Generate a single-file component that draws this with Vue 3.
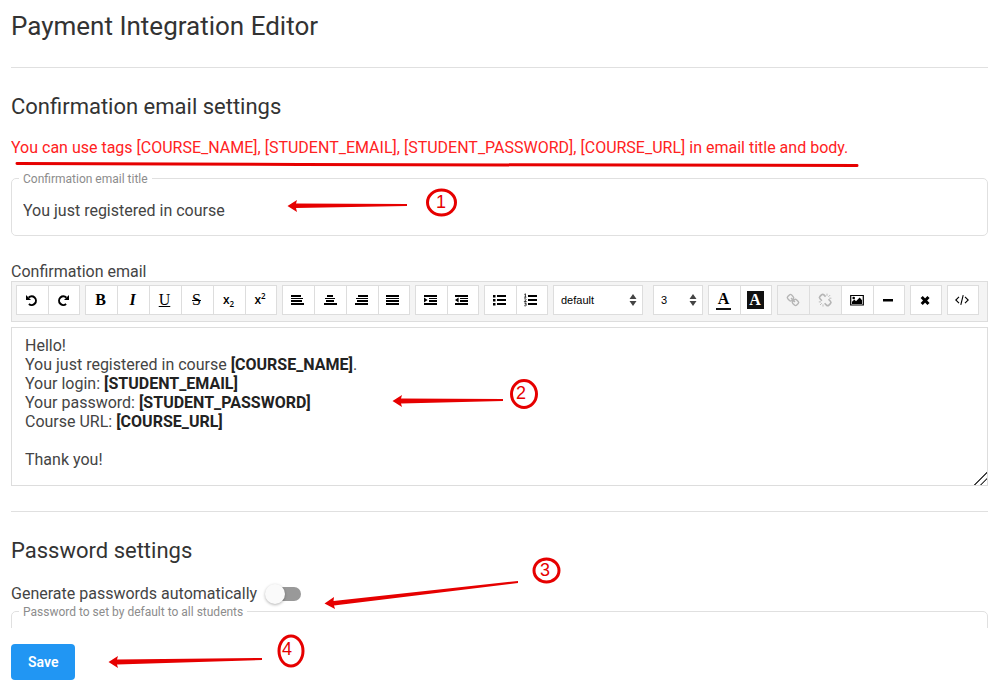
<script setup>
import { ref } from 'vue'

const title = ref('You just registered in course')
const fontName = ref('default')
const fontSize = ref('3')
const autoPasswords = ref(false)
const defaultPassword = ref('')

const icons = {
  undo: [
    { d: 'M4.6 5.6A4.3 4.3 0 1 1 4.9 12', line: 2 },
    { d: 'M2 3v5h5z' },
  ],
  redo: [
    { d: 'M11.4 5.6A4.3 4.3 0 1 0 11.1 12', line: 2 },
    { d: 'M14 3v5H9z' },
  ],
  left: [{ d: 'M1 3h10v2H1zM1 6h12v1H1zM1 8h11v2H1zM1 11h13v2H1z' }],
  center: [{ d: 'M5 3h6v2H5zM3 6h10v1H3zM4 8h8v2H4zM2 11h13v2H2z' }],
  right: [{ d: 'M4 3h10v2H4zM2 6h12v1H2zM3 8h11v2H3zM1 11h13v2H1z' }],
  justify: [{ d: 'M1 3h13v2H1zM1 6h13v1H1zM1 8h13v2H1zM1 11h13v2H1z' }],
  indent: [{ d: 'M1 3h13v2H1zM6 6h8v1H6zM6 8h8v2H6zM1 11h13v2H1zM1 5.6l3.6 2.4L1 10.4z' }],
  outdent: [{ d: 'M1 3h13v2H1zM6 6h8v1H6zM6 8h8v2H6zM1 11h13v2H1zM4.6 5.6L1 8l3.6 2.4z' }],
  bullets: [{ d: 'M5 3h9v2H5zM5 7h9v2H5zM5 11h9v2H5zM1 3h2.5v2.4H1zM1 7h2.5v2.4H1zM1 11h2.5v2.4H1z' }],
  numbers: [
    { d: 'M5 3h9v2H5zM5 7h9v2H5zM5 11h9v2H5z' },
    { d: 'M1.4 2.4l1-.6v3.4M1.2 5.2h2.2M1.2 7c1-.8 2.4 0 1.6 1L1.3 9.5h2.3M1.3 11h2l-1 1.2c2 0 1.3 2.2-1 1.5', line: 0.8 },
  ],
  link: [
    { d: 'M4.4 2.9L2.8 4.5a1.6 1.6 0 0 0 0 2.2l1.7 1.7a1.6 1.6 0 0 0 2.2 0l1.5-1.5a1.6 1.6 0 0 0 0-2.2L6.6 2.9a1.6 1.6 0 0 0-2.2 0zM9.3 7.7L7.8 9.2a1.6 1.6 0 0 0 0 2.2l1.7 1.7a1.6 1.6 0 0 0 2.2 0l1.5-1.5a1.6 1.6 0 0 0 0-2.2l-1.7-1.7a1.6 1.6 0 0 0-2.2 0zM6 6l4 4', line: 1.4 },
  ],
  unlink: [
    { d: 'M8.6 4.6L6.9 2.9a1.7 1.7 0 0 0-2.4 0L3 4.4a1.7 1.7 0 0 0 0 2.4l1.9 1.9M7.6 11.2l1.9 1.9a1.7 1.7 0 0 0 2.4 0l1.5-1.5a1.7 1.7 0 0 0 0-2.4l-1.9-1.9', line: 1.6 },
    { d: 'M10 1.6v2.2M11.4 4.8L13.2 3M12.2 6.2h2.2M6 12.4v2.2M4.8 11.2L3 13M4 9.9H1.800', line: 0.9 },
  ],
  image: [
    { d: 'M1.7 3.5h12.6v9.5H1.7z', line: 1.2 },
    { d: 'M3 12V9.8l2.3-2.2L7 9.3l3.7-3.8L13 8.3V12z' },
    { d: 'M3.4 6a1.3 1.3 0 1 0 2.6 0a1.3 1.3 0 1 0-2.6 0' },
  ],
  rule: [{ d: 'M3 7h10v2.5H3z' }],
  clear: [{ d: 'M4.7 5l6.8 7M11.5 5l-6.8 7', line: 3 }],
  source: [{ d: 'M5 4.8L1.8 8L5 11.2M11 4.8L14.2 8L11 11.2M9.2 3.2L6.8 12.8', line: 1.1 }],
}

const before = [
  [
    { name: 'Undo', icon: 'undo' },
    { name: 'Redo', icon: 'redo' },
  ],
  [
    { name: 'Bold', text: 'B', look: 'bold' },
    { name: 'Italic', text: 'I', look: 'italic' },
    { name: 'Underline', text: 'U', look: 'underline' },
    { name: 'Strikethrough', text: 'S', look: 'strike' },
    { name: 'Subscript', text: 'x', low: '2' },
    { name: 'Superscript', text: 'x', high: '2' },
  ],
  [
    { name: 'Align left', icon: 'left' },
    { name: 'Align center', icon: 'center' },
    { name: 'Align right', icon: 'right' },
    { name: 'Justify', icon: 'justify' },
  ],
  [
    { name: 'Indent', icon: 'indent' },
    { name: 'Outdent', icon: 'outdent' },
  ],
  [
    { name: 'Unordered list', icon: 'bullets' },
    { name: 'Ordered list', icon: 'numbers' },
  ],
]

const after = [
  [
    { name: 'Text color', text: 'A', look: 'fore' },
    { name: 'Background color', text: 'A', look: 'back' },
  ],
  [
    { name: 'Insert link', icon: 'link', disabled: true },
    { name: 'Unlink', icon: 'unlink', disabled: true },
    { name: 'Insert image', icon: 'image' },
    { name: 'Horizontal line', icon: 'rule' },
  ],
  [{ name: 'Clear formatting', icon: 'clear' }],
  [{ name: 'HTML code', icon: 'source' }],
]

const selects = [
  { name: 'Font', model: fontName, options: ['default', 'Arial', 'Times New Roman'], look: 'wide' },
  { name: 'Font size', model: fontSize, options: ['1', '2', '3', '4', '5', '6', '7'], look: 'narrow' },
]
</script>

<template>
  <div class="page">
    <main class="content">
      <h1>Payment Integration Editor</h1>
      <hr />
      <section>
        <h2>Confirmation email settings</h2>
        <p class="hint">
          You can use tags [COURSE_NAME], [STUDENT_EMAIL], [STUDENT_PASSWORD], [COURSE_URL] in email title and body.
        </p>
        <fieldset class="field">
          <legend><label for="title">Confirmation email title</label></legend>
          <input id="title" v-model="title" type="text" />
        </fieldset>
        <div id="email-label" class="caption">Confirmation email</div>
        <div class="toolbar" role="toolbar" aria-label="Formatting">
          <template v-for="part in ['before', 'selects', 'after']" :key="part">
            <template v-if="part === 'selects'">
              <div v-for="s in selects" :key="s.name" class="picker" :class="s.look">
                <select v-model="s.model.value" :aria-label="s.name">
                  <option v-for="o in s.options" :key="o">{{ o }}</option>
                </select>
                <svg width="8" height="12" viewBox="0 0 8 12" aria-hidden="true">
                  <path d="M4 0L7.5 5H.5zM4 12L.5 7h7z" />
                </svg>
              </div>
            </template>
            <template v-else>
              <div v-for="(group, g) in part === 'before' ? before : after" :key="g" class="group">
                <button
                  v-for="b in group"
                  :key="b.name"
                  type="button"
                  :aria-label="b.name"
                  :disabled="b.disabled"
                >
                  <svg v-if="b.icon" width="16" height="16" viewBox="0 0 16 16" aria-hidden="true">
                    <path
                      v-for="(p, i) in icons[b.icon]"
                      :key="i"
                      :d="p.d"
                      :class="p.line ? 'stroke' : 'solid'"
                      :stroke-width="p.line"
                    />
                  </svg>
                  <span v-else-if="b.look" class="glyph" :class="b.look">{{ b.text }}</span>
                  <span v-else class="script">{{ b.text }}<sub v-if="b.low">{{ b.low }}</sub><sup v-if="b.high">{{ b.high }}</sup></span>
                </button>
              </div>
            </template>
          </template>
        </div>
        <div class="editor" contenteditable="true" role="textbox" aria-multiline="true" aria-labelledby="email-label">
          <div>Hello!</div>
          <div>You just registered in course <b>[COURSE_NAME]</b>.</div>
          <div>Your login: <b>[STUDENT_EMAIL]</b></div>
          <div>Your password: <b>[STUDENT_PASSWORD]</b></div>
          <div>Course URL: <b>[COURSE_URL]</b></div>
          <div><br /></div>
          <div>Thank you!</div>
        </div>
      </section>
      <hr />
      <section>
        <h2>Password settings</h2>
        <div class="switch">
          <label for="auto">Generate passwords automatically</label>
          <input id="auto" v-model="autoPasswords" type="checkbox" role="switch" />
        </div>
        <fieldset class="field">
          <legend><label for="default-password">Password to set by default to all students</label></legend>
          <input id="default-password" v-model="defaultPassword" type="text" />
        </fieldset>
      </section>
    </main>
    <footer>
      <button type="button" class="save">Save</button>
    </footer>

    <svg class="notes" width="1006" height="688" viewBox="0 0 1006 688">
      <path class="pen" d="M17 163.5L300 164.500L857 165.500" />
      <path class="arrow" d="M287.500 206L297 200L296 203.500L407 204V206L296 208L297 212z" />
      <path class="arrow" d="M392.500 401L402 395L401 398.500L503 399V401L401 403.500L402 407z" />
      <path class="arrow" d="M324.500 603.500L334 597L333.500 601L518 581V583L334 605.500L335 609z" />
      <path class="arrow" d="M108.500 662L118 656L117 659.500L262 658V660L117 664.500L118 668z" />
      <ellipse class="pen" cx="441.500" cy="202.500" rx="14" ry="12.500" />
      <ellipse class="pen" cx="524" cy="394" rx="12.500" ry="13.500" />
      <ellipse class="pen" cx="546.500" cy="570.500" rx="12.500" ry="11.500" />
      <ellipse class="pen" cx="291" cy="651" rx="12" ry="15" />
      <text x="441" y="208">1</text>
      <text x="521" y="399">2</text>
      <text x="545" y="576">3</text>
      <text x="287" y="655">4</text>
    </svg>
  </div>
</template>

<style>
body {
  margin: 0;
  background: #fff;
}
</style>

<style scoped>
.page {
  position: relative;
  display: flex;
  flex-direction: column;
  height: 100vh;
  overflow: hidden;
  box-sizing: border-box;
  padding: 0 18px 0 11px;
  font-family: Roboto, 'Liberation Sans', sans-serif;
  font-size: 16px;
  font-weight: 400;
  color: #444;
}
.content {
  flex: 1;
  min-height: 0;
  overflow: hidden;
}
h1,
h2 {
  margin: 0;
  font-weight: 400;
  line-height: 32px;
  color: #333;
}
h1 {
  padding: 10px 0 25px;
  font-size: 26px;
}
h2 {
  padding-top: 23px;
  font-size: 22px;
}
hr {
  margin: 0;
  border: 0;
  border-top: 1px solid #e0e0e0;
}
.hint {
  margin: 0;
  padding: 13px 0 11px;
  line-height: 24px;
  color: #f22;
}
.field {
  margin: 0;
  padding: 0 11px;
  border: 1px solid #e0e0e0;
  border-radius: 5px;
  min-width: 0;
}
.field legend {
  margin-left: -4px;
  padding: 2px 4px 0;
  font-size: 12px;
  line-height: 12px;
  color: #8c8c8c;
}
.field input {
  display: block;
  width: 100%;
  height: 50px;
  box-sizing: border-box;
  padding: 0;
  border: 0;
  outline: 0;
  background: none;
  font: inherit;
  color: #444;
}
.caption {
  padding-top: 26px;
  line-height: 19px;
}
.toolbar {
  display: flex;
  gap: 5px;
  padding: 3px 4px 6px;
  border: 1px solid #ddd;
  background: #f4f4f4;
}
.group {
  display: flex;
}
.group button {
  display: flex;
  align-items: center;
  justify-content: center;
  width: 32px;
  height: 30px;
  padding: 0 2px 0 0;
  border: 1px solid #ddd;
  border-right-width: 0;
  background: #fff;
  color: #000;
}
.group button:last-child {
  border-right-width: 1px;
}
.group button:disabled {
  background: #f4f4f4;
  color: #b5b5b5;
}
.solid {
  fill: currentColor;
}
.stroke {
  fill: none;
  stroke: currentColor;
}
.glyph {
  font: bold 16px/18px 'Liberation Serif', serif;
}
.italic {
  font-style: italic;
}
.underline {
  font-weight: 400;
  text-decoration: underline;
}
.strike {
  font-weight: 400;
  text-decoration: line-through;
}
.fore {
  width: 15px;
  border-bottom: 2px solid #111;
}
.back {
  width: 17px;
  background: #111;
  color: #fff;
}
.script {
  font: 600 12px/16px 'Open Sans', sans-serif;
}
.script sub,
.script sup {
  font-size: 8px;
  line-height: 1px;
}
.picker {
  display: grid;
  align-items: center;
}
.picker > * {
  grid-area: 1 / 1;
}
.picker svg {
  justify-self: end;
  margin-right: 6px;
  fill: #444;
  pointer-events: none;
}
.wide {
  width: 90px;
}
.narrow {
  width: 50px;
  margin-left: 5px;
}
.picker select {
  appearance: none;
  width: 100%;
  height: 30px;
  padding: 0 7px;
  border: 1px solid #ddd;
  border-radius: 0;
  background: #fff;
  font: 11px 'Liberation Sans', sans-serif;
  color: #000;
}
.editor {
  height: 159px;
  box-sizing: border-box;
  margin: 5px 0 25px;
  padding: 8px 13px;
  border: 1px solid #ddd;
  outline: 0;
  overflow: auto;
  resize: vertical;
  line-height: 19px;
}
.editor::-webkit-resizer {
  background: linear-gradient(
    135deg,
    transparent 55%,
    #444 56%,
    #444 60%,
    transparent 61%,
    transparent 76%,
    #444 77%,
    #444 81%,
    transparent 82%
  );
}
.editor b {
  font-weight: 700;
  color: #222;
}
.switch {
  display: flex;
  align-items: center;
  gap: 11px;
  padding-top: 17px;
  line-height: 20px;
}
.switch input {
  appearance: none;
  display: flex;
  align-items: center;
  width: 33px;
  height: 14px;
  margin: 0;
  border-radius: 7px;
  background: #999;
}
.switch input::before {
  content: '';
  width: 20px;
  height: 20px;
  flex: none;
  margin-left: -3px;
  border-radius: 50%;
  background: #fafafa;
  box-shadow: 0 1px 3px rgba(0, 0, 0, 0.3);
}
.switch input:checked::before {
  margin-left: 16px;
}
footer {
  padding: 16px 0 8px;
}
.save {
  display: block;
  height: 36px;
  padding: 0 17px;
  border: 0;
  border-radius: 4px;
  background: #2196f3;
  font: 600 14px Roboto, sans-serif;
  color: #fff;
}
.notes {
  position: absolute;
  top: 0;
  left: 0;
  pointer-events: none;
}
.pen {
  fill: none;
  stroke: #e60000;
  stroke-width: 3;
  stroke-linecap: round;
}
.arrow {
  fill: #e60000;
}
.notes text {
  font: 18px 'Liberation Sans', sans-serif;
  fill: #e60000;
  text-anchor: middle;
}
</style>
